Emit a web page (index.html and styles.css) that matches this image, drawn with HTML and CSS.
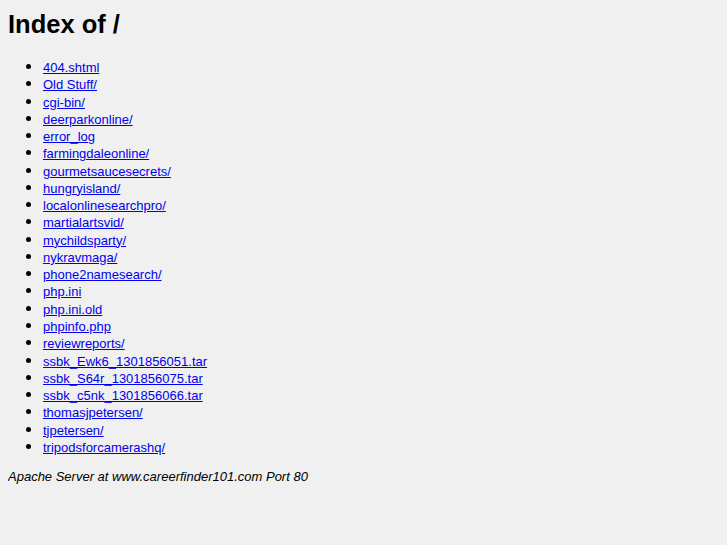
FILE: index.html
```html
<!DOCTYPE html>
<html lang="en">
<head>
  <meta charset="UTF-8">
  <title>Index of /</title>
  <link rel="stylesheet" href="styles.css">
</head>
<body>
  <h1>Index of /</h1>
  <ul>
    <li><a href="/404.shtml">404.shtml</a></li>
    <li><a href="/Old%20Stuff/">Old Stuff/</a></li>
    <li><a href="/cgi-bin/">cgi-bin/</a></li>
    <li><a href="/deerparkonline/">deerparkonline/</a></li>
    <li><a href="/error_log">error_log</a></li>
    <li><a href="/farmingdaleonline/">farmingdaleonline/</a></li>
    <li><a href="/gourmetsaucesecrets/">gourmetsaucesecrets/</a></li>
    <li><a href="/hungryisland/">hungryisland/</a></li>
    <li><a href="/localonlinesearchpro/">localonlinesearchpro/</a></li>
    <li><a href="/martialartsvid/">martialartsvid/</a></li>
    <li><a href="/mychildsparty/">mychildsparty/</a></li>
    <li><a href="/nykravmaga/">nykravmaga/</a></li>
    <li><a href="/phone2namesearch/">phone2namesearch/</a></li>
    <li><a href="/php.ini">php.ini</a></li>
    <li><a href="/php.ini.old">php.ini.old</a></li>
    <li><a href="/phpinfo.php">phpinfo.php</a></li>
    <li><a href="/reviewreports/">reviewreports/</a></li>
    <li><a href="/ssbk_Ewk6_1301856051.tar">ssbk_Ewk6_1301856051.tar</a></li>
    <li><a href="/ssbk_S64r_1301856075.tar">ssbk_S64r_1301856075.tar</a></li>
    <li><a href="/ssbk_c5nk_1301856066.tar">ssbk_c5nk_1301856066.tar</a></li>
    <li><a href="/thomasjpetersen/">thomasjpetersen/</a></li>
    <li><a href="/tjpetersen/">tjpetersen/</a></li>
    <li><a href="/tripodsforcamerashq/">tripodsforcamerashq/</a></li>
  </ul>
  <address>Apache Server at www.careerfinder101.com Port 80</address>
</body>
</html>
```

FILE: styles.css
```css
body {
  margin: 0 8px 8px;
  background: #f0f0f0;
  color: #000;
  font-family: "Liberation Sans", Arial, sans-serif;
  font-size: 13px;
}

h1 {
  font-size: 25.5px;
  font-weight: bold;
  margin: 10px 0 0;
  line-height: 29px;
}

ul {
  margin: 19px 0 0;
  padding-left: 35px;
}

li {
  height: 17.27px;
  line-height: 17.27px;
}

li::marker {
  font-size: 17px;
}

a {
  color: #0000ee;
}

address {
  font-style: italic;
  margin-top: 14px;
  line-height: 15px;
}
```
